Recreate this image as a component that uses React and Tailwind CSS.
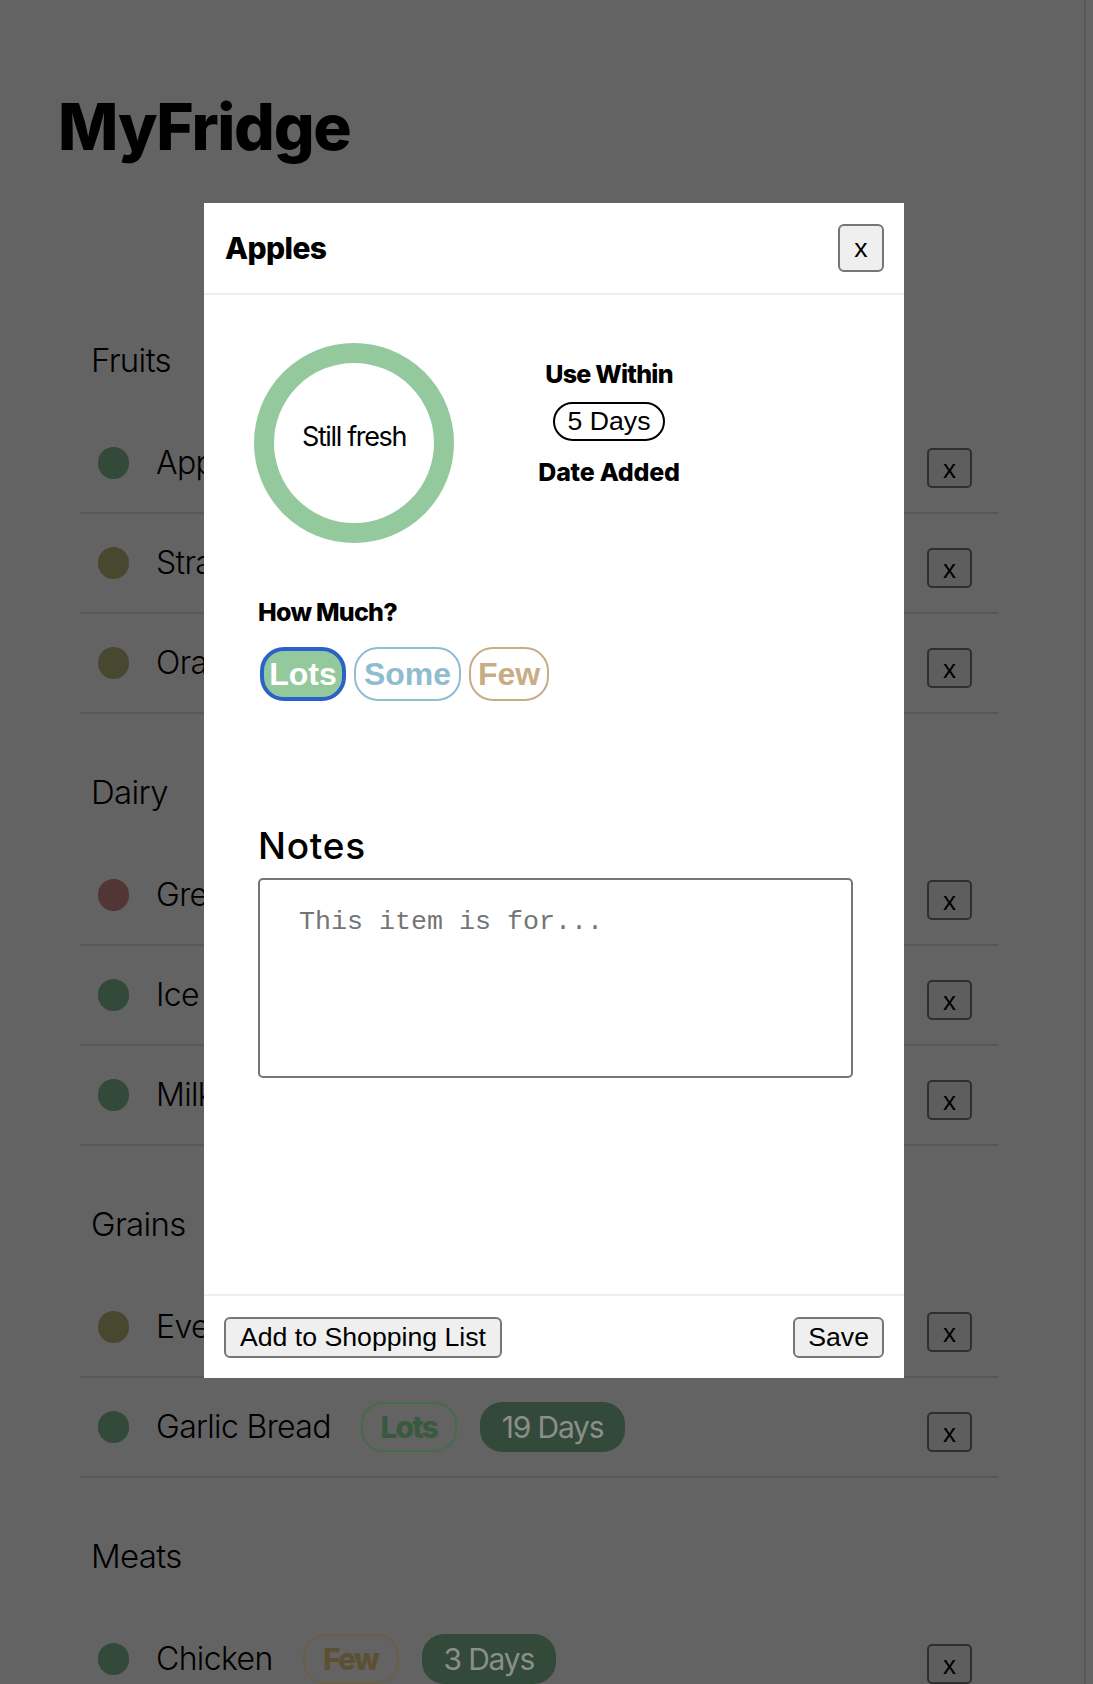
import { useState } from 'react'

// dimmed page behind the modal, colours taken as they appear under the backdrop
const sections = [
  {
    title: 'Fruits',
    items: [
      { name: 'Apples', dot: 'bg-[#33493a]', qty: 'Lots', days: '5 Days' },
      { name: 'Strawberries', dot: 'bg-[#484830]', qty: 'Some', days: '2 Days' },
      { name: 'Oranges', dot: 'bg-[#484830]', qty: 'Few', days: '3 Days' },
    ],
  },
  {
    title: 'Dairy',
    items: [
      { name: 'Greek Yogurt', dot: 'bg-[#523535]', qty: 'Some', days: '1 Day' },
      { name: 'Ice Cream', dot: 'bg-[#33493a]', qty: 'Lots', days: '30 Days' },
      { name: 'Milk', dot: 'bg-[#33493a]', qty: 'Some', days: '6 Days' },
    ],
  },
  {
    title: 'Grains',
    items: [
      { name: 'Everything Bagel', dot: 'bg-[#484830]', qty: 'Few', days: '2 Days' },
      { name: 'Garlic Bread', dot: 'bg-[#33493a]', qty: 'Lots', days: '19 Days' },
    ],
  },
  {
    title: 'Meats',
    items: [{ name: 'Chicken', dot: 'bg-[#33493a]', qty: 'Few', days: '3 Days' }],
  },
]

const qtyTag = {
  Lots: 'border-[#466a4b] text-[#3a5a3f]',
  Some: 'border-[#46606b] text-[#3d5a66]',
  Few: 'border-[#6b5e45] text-[#5c5033]',
}

const sans = "font-['Inter','Noto_Sans',sans-serif]"
const arial = "font-['Liberation_Sans',Arial,sans-serif]"

function Row({ item }) {
  return (
    <div className="flex h-[100px] items-center border-b-2 border-[#575757] pl-[18px] pr-[26px]">
      <span className={`h-[32px] w-[31px] shrink-0 rounded-full ${item.dot}`} />
      <span className="ml-[27px] text-[32px] font-light tracking-[-0.02em] text-black whitespace-nowrap">{item.name}</span>
      <span className={`ml-[30px] flex h-[50px] w-[96px] shrink-0 items-center justify-center rounded-[22px] border-2 text-[30px] font-extrabold tracking-[-0.06em] ${qtyTag[item.qty]}`}>
        {item.qty}
      </span>
      <span className="ml-[23px] flex h-[50px] shrink-0 items-center rounded-[22px] bg-[#33493a] px-[22px] text-[30px] tracking-[-0.04em] text-[#8a8f8a] whitespace-nowrap">
        {item.days}
      </span>
      <button className={`ml-auto mt-[10px] h-[40px] w-[45px] shrink-0 rounded-[5px] border-2 border-[#2f2f2f] bg-[#5e5e5e] text-[26px] text-black ${arial}`}>x</button>
    </div>
  )
}

function Section({ section }) {
  return (
    <div>
      <h2 className="pt-[58px] pb-[34px] pl-[11px] text-[33px] leading-[40px] font-light tracking-[-0.02em] text-black">{section.title}</h2>
      {section.items.map((item) => (
        <Row key={item.name} item={item} />
      ))}
    </div>
  )
}

const amountBtn = {
  Lots: { base: 'w-[86px] bg-[#93c99c] text-white', idle: 'border-2 border-[#93c99c]' },
  Some: { base: 'w-[107px] bg-white text-[#8fbdd0]', idle: 'border-2 border-[#8fbdd0]' },
  Few: { base: 'w-[80px] bg-white text-[#c8ad84]', idle: 'border-2 border-[#c8ad84]' },
}

function ItemModal() {
  const [amount, setAmount] = useState('Lots')
  const heading = 'text-[25px] leading-[30px] font-extrabold text-black'

  return (
    <div className="absolute left-[204px] top-[203px] w-[700px] bg-white">
      <div className="flex h-[92px] items-center justify-between border-b-2 border-[#eeeeee] pl-[21px] pr-[20px]">
        <h1 className="text-[30px] font-extrabold tracking-[-0.02em] text-black">Apples</h1>
        <button className={`h-[48px] w-[46px] rounded-[6px] border-2 border-[#767676] bg-[#efefef] text-[26.67px] text-black ${arial}`}>x</button>
      </div>

      <div className="h-[999px] pl-[54px] pr-[53px] pt-[48px]">
        <div className="flex items-start">
          <div className="ml-[-4px] flex h-[200px] w-[200px] items-center justify-center rounded-full border-[20px] border-[#93c99c] pb-[12px]">
            <span className="text-[27px] tracking-[-0.05em] text-black">Still fresh</span>
          </div>
          <div className="ml-[75px] mt-[16px] flex w-[160px] flex-col items-center">
            <h3 className={`${heading} tracking-[-0.03em]`}>Use Within</h3>
            <span className={`mt-[13px] rounded-full border-2 border-black px-[13px] py-[2px] text-[26.67px] leading-[31px] text-black ${arial}`}>5 Days</span>
            <h3 className={`mt-[16px] ${heading} tracking-[-0.01em]`}>Date Added</h3>
          </div>
        </div>

        <h3 className={`mt-[54px] ${heading} tracking-[-0.03em]`}>How Much?</h3>
        <div className="ml-[2px] mt-[20px] flex gap-[8px]">
          {['Lots', 'Some', 'Few'].map((a) => (
            <button
              key={a}
              onClick={() => setAmount(a)}
              className={`flex h-[54px] items-center justify-center rounded-[24px] text-[32px] font-bold ${arial} ${amountBtn[a].base} ${amount === a ? 'border-[4px] border-[#2a62c8]' : amountBtn[a].idle}`}
            >
              {a}
            </button>
          ))}
        </div>

        <h2 className="mt-[123px] text-[37px] leading-[43px] font-medium tracking-[0.02em] text-black">Notes</h2>
        <textarea
          placeholder="This item is for..."
          className="mt-[11px] block h-[200px] w-[595px] resize-none rounded-[5px] border-2 border-[#767676] pl-[39px] pt-[22px] font-['Liberation_Mono',monospace] text-[26.67px] placeholder:text-[#757575]"
        />
      </div>

      <div className={`flex items-center justify-between border-t-2 border-[#eeeeee] px-[20px] pt-[21px] pb-[20px] ${arial}`}>
        <button className="rounded-[6px] border-2 border-[#767676] bg-[#efefef] px-[14px] py-[3px] text-[26.67px] leading-[31px] text-black">Add to Shopping List</button>
        <button className="rounded-[6px] border-2 border-[#767676] bg-[#efefef] px-[13px] py-[3px] text-[26.67px] leading-[31px] text-black">Save</button>
      </div>
    </div>
  )
}

export default function App() {
  return (
    <div className={`relative flex h-[1684px] overflow-hidden bg-[#636363] ${sans}`}>
      <div className="w-[1086px] shrink-0 border-r-2 border-[#585858]">
        <h1 className="ml-[58px] pt-[88px] text-[64px] leading-[77px] font-extrabold tracking-[-0.02em] text-black">MyFridge</h1>
        <div className="ml-[80px] mt-[117px] w-[918px]">
          {sections.map((s) => (
            <Section key={s.title} section={s} />
          ))}
        </div>
      </div>
      <ItemModal />
    </div>
  )
}
